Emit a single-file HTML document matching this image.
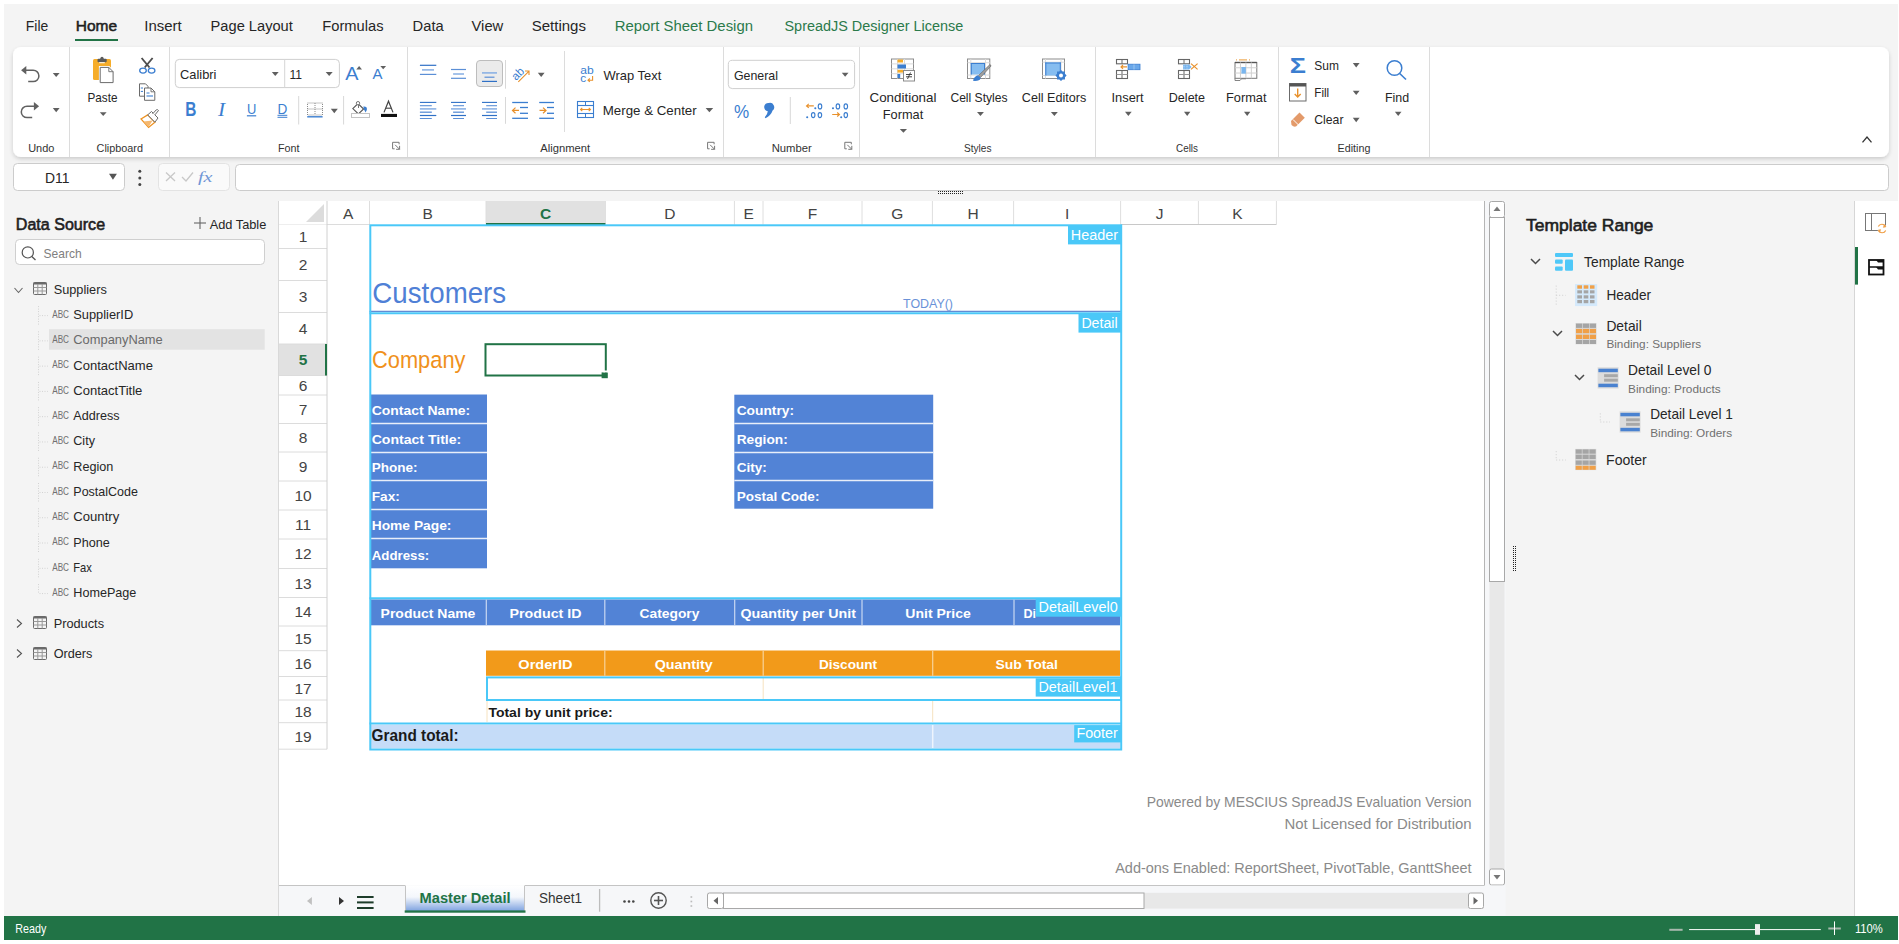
<!DOCTYPE html>
<html><head><meta charset="utf-8"><title>SpreadJS Designer</title>
<style>html,body{margin:0;padding:0;background:#fff;width:1899px;height:944px;overflow:hidden;position:relative;font-family:"Liberation Sans",sans-serif}</style>
</head><body>
<svg width="1899" height="944" viewBox="0 0 1899 944" style="position:absolute;left:0;top:0">
<defs><filter id="sh" x="-2%" y="-20%" width="104%" height="150%"><feGaussianBlur in="SourceAlpha" stdDeviation="2"/><feOffset dy="1.5"/><feComponentTransfer><feFuncA type="linear" slope="0.17"/></feComponentTransfer><feMerge><feMergeNode/><feMergeNode in="SourceGraphic"/></feMerge></filter><linearGradient id="tabg" x1="0" y1="0" x2="0" y2="1"><stop offset="0" stop-color="#ffffff"/><stop offset="0.45" stop-color="#f4f7fc"/><stop offset="1" stop-color="#7fa3e0"/></linearGradient></defs>
<rect x="0.00" y="0.00" width="1899.00" height="944.00" fill="#ffffff"/>
<rect x="4.00" y="4.00" width="1894.00" height="936.00" fill="#f4f4f4"/>
<text x="25.80" y="31.00" font-family="Liberation Sans" font-size="15.50" font-weight="400" font-style="normal" fill="#262626" textLength="22.42" lengthAdjust="spacingAndGlyphs">File</text>
<text x="75.80" y="31.00" font-family="Liberation Sans" font-size="15.50" font-weight="400" font-style="normal" fill="#1f1f1f" textLength="41.36" lengthAdjust="spacingAndGlyphs" stroke="#1f1f1f" stroke-width="0.55">Home</text>
<text x="144.30" y="31.00" font-family="Liberation Sans" font-size="15.50" font-weight="400" font-style="normal" fill="#262626" textLength="37.42" lengthAdjust="spacingAndGlyphs">Insert</text>
<text x="210.60" y="31.00" font-family="Liberation Sans" font-size="15.50" font-weight="400" font-style="normal" fill="#262626" textLength="82.21" lengthAdjust="spacingAndGlyphs">Page Layout</text>
<text x="322.30" y="31.00" font-family="Liberation Sans" font-size="15.50" font-weight="400" font-style="normal" fill="#262626" textLength="61.27" lengthAdjust="spacingAndGlyphs">Formulas</text>
<text x="412.60" y="31.00" font-family="Liberation Sans" font-size="15.50" font-weight="400" font-style="normal" fill="#262626" textLength="31.06" lengthAdjust="spacingAndGlyphs">Data</text>
<text x="471.50" y="31.00" font-family="Liberation Sans" font-size="15.50" font-weight="400" font-style="normal" fill="#262626" textLength="31.79" lengthAdjust="spacingAndGlyphs">View</text>
<text x="531.70" y="31.00" font-family="Liberation Sans" font-size="15.50" font-weight="400" font-style="normal" fill="#262626" textLength="54.28" lengthAdjust="spacingAndGlyphs">Settings</text>
<text x="614.70" y="31.00" font-family="Liberation Sans" font-size="15.50" font-weight="400" font-style="normal" fill="#2b7a4b" textLength="138.28" lengthAdjust="spacingAndGlyphs">Report Sheet Design</text>
<text x="784.50" y="31.00" font-family="Liberation Sans" font-size="15.50" font-weight="400" font-style="normal" fill="#2b7a4b" textLength="178.82" lengthAdjust="spacingAndGlyphs">SpreadJS Designer License</text>
<rect x="75.00" y="39.00" width="43.00" height="2.00" fill="#217346"/>
<rect x="13.00" y="47.00" width="1876.00" height="110.00" fill="#ffffff" rx="8" filter="url(#sh)"/>
<line x1="69.50" y1="47.00" x2="69.50" y2="157.00" stroke="#dcdcdc" stroke-width="1"/>
<line x1="169.50" y1="47.00" x2="169.50" y2="157.00" stroke="#dcdcdc" stroke-width="1"/>
<line x1="407.50" y1="47.00" x2="407.50" y2="157.00" stroke="#dcdcdc" stroke-width="1"/>
<line x1="723.50" y1="47.00" x2="723.50" y2="157.00" stroke="#dcdcdc" stroke-width="1"/>
<line x1="859.50" y1="47.00" x2="859.50" y2="157.00" stroke="#dcdcdc" stroke-width="1"/>
<line x1="1095.50" y1="47.00" x2="1095.50" y2="157.00" stroke="#dcdcdc" stroke-width="1"/>
<line x1="1278.50" y1="47.00" x2="1278.50" y2="157.00" stroke="#dcdcdc" stroke-width="1"/>
<line x1="1429.50" y1="47.00" x2="1429.50" y2="157.00" stroke="#dcdcdc" stroke-width="1"/>
<text x="28.20" y="151.80" font-family="Liberation Sans" font-size="11.50" font-weight="400" font-style="normal" fill="#333333" textLength="26.21" lengthAdjust="spacingAndGlyphs">Undo</text>
<text x="96.60" y="151.80" font-family="Liberation Sans" font-size="11.50" font-weight="400" font-style="normal" fill="#333333" textLength="46.41" lengthAdjust="spacingAndGlyphs">Clipboard</text>
<text x="278.00" y="151.80" font-family="Liberation Sans" font-size="11.50" font-weight="400" font-style="normal" fill="#333333" textLength="21.51" lengthAdjust="spacingAndGlyphs">Font</text>
<text x="540.30" y="151.80" font-family="Liberation Sans" font-size="11.50" font-weight="400" font-style="normal" fill="#333333" textLength="49.82" lengthAdjust="spacingAndGlyphs">Alignment</text>
<text x="771.70" y="151.80" font-family="Liberation Sans" font-size="11.50" font-weight="400" font-style="normal" fill="#333333" textLength="40.12" lengthAdjust="spacingAndGlyphs">Number</text>
<text x="964.00" y="151.80" font-family="Liberation Sans" font-size="11.50" font-weight="400" font-style="normal" fill="#333333" textLength="27.48" lengthAdjust="spacingAndGlyphs">Styles</text>
<text x="1176.00" y="151.80" font-family="Liberation Sans" font-size="11.50" font-weight="400" font-style="normal" fill="#333333" textLength="21.98" lengthAdjust="spacingAndGlyphs">Cells</text>
<text x="1337.60" y="151.80" font-family="Liberation Sans" font-size="11.50" font-weight="400" font-style="normal" fill="#333333" textLength="32.78" lengthAdjust="spacingAndGlyphs">Editing</text>
<path d="M399.1,144.3 V142.3 H392.6 V148.8 H394.6" fill="none" stroke="#777" stroke-width="1"/>
<path d="M395.1,144.8 L399.6,149.3 M399.6,145.8 V149.3 H396.1" fill="none" stroke="#777" stroke-width="1"/>
<path d="M714.1,144.3 V142.3 H707.6 V148.8 H709.6" fill="none" stroke="#777" stroke-width="1"/>
<path d="M710.1,144.8 L714.6,149.3 M714.6,145.8 V149.3 H711.1" fill="none" stroke="#777" stroke-width="1"/>
<path d="M851.3,144.3 V142.3 H844.8 V148.8 H846.8" fill="none" stroke="#777" stroke-width="1"/>
<path d="M847.3,144.8 L851.8,149.3 M851.8,145.8 V149.3 H848.3" fill="none" stroke="#777" stroke-width="1"/>
<path d="M21.1,70.2 L26.3,66 L26.3,74.4 Z" fill="#616161"/>
<path d="M25.5,70.2 H33.2 A5.7,5.7 0 0 1 33.2,81.6 H28.2" fill="none" stroke="#616161" stroke-width="1.5"/>
<path d="M39.1,106.2 L33.9,102 L33.9,110.4 Z" fill="#616161"/>
<path d="M34.7,106.2 H27 A5.7,5.7 0 0 0 27,117.6 H32.2" fill="none" stroke="#616161" stroke-width="1.5"/>
<path d="M52.8,72.9 L59.6,72.9 L56.2,77.1 Z" fill="#5f5f5f"/>
<path d="M52.8,108 L59.6,108 L56.2,112.3 Z" fill="#5f5f5f"/>
<rect x="93.00" y="59.00" width="18.00" height="21.00" fill="#f6ad2a" rx="1.5"/>
<rect x="97.50" y="58.80" width="9.20" height="3.40" fill="#5a5a5a" rx="1"/>
<circle cx="102" cy="58.3" r="1.6" fill="#5a5a5a"/>
<rect x="99.20" y="62.20" width="5.60" height="1.00" fill="#fff"/>
<path d="M100.2,67.4 H108.8 L113.1,71.7 V82.6 H100.2 Z" fill="#ffffff" stroke="#ffffff" stroke-width="2.6"/>
<path d="M100.2,67.4 H108.8 L113.1,71.7 V82.6 H100.2 Z" fill="#ffffff" stroke="#6b6b6b" stroke-width="1"/>
<path d="M108.8,67.4 V71.7 H113.1" fill="none" stroke="#6b6b6b" stroke-width="0.9"/>
<text x="87.50" y="101.70" font-family="Liberation Sans" font-size="12.40" font-weight="400" font-style="normal" fill="#262626" textLength="30.03" lengthAdjust="spacingAndGlyphs">Paste</text>
<path d="M99.8,112.3 L106.6,112.3 L103.19999999999999,116.1 Z" fill="#5f5f5f"/>
<line x1="141.60" y1="58.00" x2="149.50" y2="67.50" stroke="#4d4d4d" stroke-width="1.9"/>
<line x1="152.60" y1="58.00" x2="144.70" y2="67.50" stroke="#4d4d4d" stroke-width="1.9"/>
<ellipse cx="143" cy="70.6" rx="3.3" ry="2.5" fill="#fff" stroke="#3b7ed0" stroke-width="1.3"/>
<ellipse cx="151.6" cy="70.6" rx="3.3" ry="2.5" fill="#fff" stroke="#3b7ed0" stroke-width="1.3"/>
<path d="M139.5,83.8 H145.5 L148,86.3 V96.2 H139.5 Z" fill="#fff" stroke="#6b6b6b" stroke-width="1"/>
<path d="M144.5,88 H151 L154.8,91.8 V100.3 H144.5 Z" fill="#fff" stroke="#6b6b6b" stroke-width="1"/>
<path d="M151,88 V91.8 H154.8" fill="none" stroke="#6b6b6b" stroke-width="0.9"/>
<line x1="146.50" y1="93.00" x2="149.50" y2="93.00" stroke="#3b7ed0" stroke-width="1"/>
<line x1="146.50" y1="96.00" x2="153.00" y2="96.00" stroke="#3b7ed0" stroke-width="1.1"/>
<line x1="140.80" y1="88.00" x2="143.00" y2="88.00" stroke="#3b7ed0" stroke-width="1"/>
<line x1="140.80" y1="91.40" x2="143.00" y2="91.40" stroke="#3b7ed0" stroke-width="1"/>
<path d="M141,119 L147.7,114.9 L154.9,122.2 L148.6,127.4 Z" fill="#fff" stroke="#ee9220" stroke-width="1.3"/>
<path d="M143.5,121.5 L152.5,120.5 L148.6,127 Z" fill="#f5b870"/>
<path d="M147.7,114.9 L151.5,111.5 L158,118 L154.9,122.2 Z" fill="#fff" stroke="#6b6b6b" stroke-width="1"/>
<path d="M152.5,114 L156.3,109.8 Q157.8,109.2 158.5,110.5 L155,114.8" fill="#fff" stroke="#6b6b6b" stroke-width="1"/>
<rect x="175.30" y="59.40" width="164.10" height="28.20" fill="#ffffff" stroke="#cfcfcf" stroke-width="1" rx="4"/>
<line x1="284.70" y1="59.40" x2="284.70" y2="87.60" stroke="#d6d6d6" stroke-width="1"/>
<text x="180.10" y="78.80" font-family="Liberation Sans" font-size="12.80" font-weight="400" font-style="normal" fill="#262626" textLength="36.39" lengthAdjust="spacingAndGlyphs">Calibri</text>
<path d="M271.8,72 L278.7,72 L275.25,75.9 Z" fill="#5f5f5f"/>
<text x="289.50" y="78.80" font-family="Liberation Sans" font-size="12.80" font-weight="400" font-style="normal" fill="#262626" textLength="12.58" lengthAdjust="spacingAndGlyphs">11</text>
<path d="M325.7,72 L332.7,72 L329.2,75.9 Z" fill="#5f5f5f"/>
<text x="345.30" y="80.00" font-family="Liberation Sans" font-size="19.00" font-weight="400" font-style="normal" fill="#3b7ed0" textLength="13.24" lengthAdjust="spacingAndGlyphs">A</text>
<path d="M356.3,69.5 L359.15,66.1 L362,69.5 Z" fill="#616161"/>
<text x="372.40" y="79.00" font-family="Liberation Sans" font-size="14.50" font-weight="400" font-style="normal" fill="#3b7ed0" textLength="9.96" lengthAdjust="spacingAndGlyphs">A</text>
<path d="M380.3,66.1 L386.1,66.1 L383.2,69.3 Z" fill="#616161"/>
<text x="185.20" y="116.30" font-family="Liberation Sans" font-size="19.50" font-weight="700" font-style="normal" fill="#3b7ed0" textLength="11.13" lengthAdjust="spacingAndGlyphs">B</text>
<text x="217.91" y="116.00" font-family="Liberation Serif" font-size="19.00" font-weight="400" font-style="italic" fill="#3b7ed0" textLength="7.10" lengthAdjust="spacingAndGlyphs">I</text>
<text x="246.90" y="113.50" font-family="Liberation Sans" font-size="15.00" font-weight="400" font-style="normal" fill="#3b7ed0" textLength="9.33" lengthAdjust="spacingAndGlyphs">U</text>
<line x1="246.90" y1="115.80" x2="256.20" y2="115.80" stroke="#3b7ed0" stroke-width="1.2"/>
<text x="277.50" y="113.50" font-family="Liberation Sans" font-size="15.00" font-weight="400" font-style="normal" fill="#3b7ed0" textLength="9.83" lengthAdjust="spacingAndGlyphs">D</text>
<line x1="277.50" y1="115.30" x2="287.30" y2="115.30" stroke="#3b7ed0" stroke-width="1"/>
<line x1="277.50" y1="117.30" x2="287.30" y2="117.30" stroke="#3b7ed0" stroke-width="1"/>
<line x1="298.70" y1="96.00" x2="298.70" y2="124.50" stroke="#d8d8d8" stroke-width="1"/>
<rect x="307.50" y="103.00" width="15.00" height="12.00" fill="none" stroke="#8a8a8a" stroke-width="1" stroke-dasharray="1,1"/>
<line x1="315.00" y1="103.00" x2="315.00" y2="115.00" stroke="#8a8a8a" stroke-width="1" stroke-dasharray="1,1"/>
<line x1="307.50" y1="109.00" x2="322.50" y2="109.00" stroke="#8a8a8a" stroke-width="1" stroke-dasharray="1,1"/>
<line x1="307.20" y1="116.80" x2="322.60" y2="116.80" stroke="#3b7ed0" stroke-width="1.4"/>
<path d="M330.8,108.7 L337.8,108.7 L334.3,113.2 Z" fill="#5f5f5f"/>
<line x1="343.60" y1="96.00" x2="343.60" y2="124.50" stroke="#d8d8d8" stroke-width="1"/>
<path d="M352.8,108.6 L358,103.6 L363.6,109 L358.4,114 Z" fill="#fff" stroke="#555" stroke-width="1.1"/>
<circle cx="358" cy="103.2" r="1.7" fill="#fff" stroke="#777" stroke-width="1"/>
<line x1="358.50" y1="104.50" x2="358.50" y2="108.00" stroke="#777" stroke-width="1"/>
<path d="M363.3,106.6 Q367.6,106.3 366.8,110 L365.6,112.4 L364,109.5 Z" fill="#3b7ed0"/>
<rect x="351.50" y="113.50" width="18.00" height="4.00" fill="#fff" stroke="#c4c4c4" stroke-width="1"/>
<path d="M384,112.4 L388.5,101.2 L393,112.4" fill="none" stroke="#444" stroke-width="1.2"/>
<line x1="385.80" y1="108.20" x2="391.20" y2="108.20" stroke="#444" stroke-width="1.1"/>
<rect x="381.00" y="113.90" width="16.00" height="3.10" fill="#111"/>
<line x1="419.90" y1="65.30" x2="436.30" y2="65.30" stroke="#2f70c6" stroke-width="1.2"/>
<line x1="422.00" y1="69.90" x2="434.00" y2="69.90" stroke="#86aee3" stroke-width="1.5"/>
<line x1="419.90" y1="74.40" x2="436.30" y2="74.40" stroke="#5b8fd6" stroke-width="1.2"/>
<line x1="451.00" y1="69.50" x2="466.00" y2="69.50" stroke="#5b8fd6" stroke-width="1.2"/>
<line x1="453.10" y1="74.00" x2="464.00" y2="74.00" stroke="#86aee3" stroke-width="1.5"/>
<line x1="451.00" y1="78.30" x2="466.00" y2="78.30" stroke="#5b8fd6" stroke-width="1.2"/>
<rect x="476.50" y="60.50" width="26.00" height="26.00" fill="#ebebeb" stroke="#bdbdbd" stroke-width="1" rx="3.5"/>
<line x1="482.00" y1="72.90" x2="497.00" y2="72.90" stroke="#86aee3" stroke-width="1.5"/>
<line x1="484.50" y1="77.20" x2="494.50" y2="77.20" stroke="#5b8fd6" stroke-width="1.2"/>
<line x1="482.00" y1="81.40" x2="497.00" y2="81.40" stroke="#2f70c6" stroke-width="1.2"/>
<line x1="505.50" y1="60.00" x2="505.50" y2="88.70" stroke="#d8d8d8" stroke-width="1"/>
<text x="516" y="81" font-family="Liberation Sans" font-size="11.5" fill="#3b7ed0" transform="rotate(-45 516 81)">ab</text>
<path d="M518.3,81.8 L528.8,71.3 M525,71 H529 V75" fill="none" stroke="#e8912c" stroke-width="1.1"/>
<path d="M537.8,72.7 L544.6,72.7 L541.2,77 Z" fill="#5f5f5f"/>
<line x1="419.90" y1="102.40" x2="436.30" y2="102.40" stroke="#2f70c6" stroke-width="1.1"/>
<line x1="451.00" y1="102.40" x2="466.00" y2="102.40" stroke="#2f70c6" stroke-width="1.1"/>
<line x1="482.00" y1="102.40" x2="497.00" y2="102.40" stroke="#2f70c6" stroke-width="1.1"/>
<line x1="419.90" y1="105.70" x2="431.80" y2="105.70" stroke="#5b8fd6" stroke-width="1.1"/>
<line x1="453.10" y1="105.70" x2="464.00" y2="105.70" stroke="#5b8fd6" stroke-width="1.1"/>
<line x1="486.20" y1="105.70" x2="497.00" y2="105.70" stroke="#5b8fd6" stroke-width="1.1"/>
<line x1="419.90" y1="108.90" x2="436.30" y2="108.90" stroke="#86aee3" stroke-width="1.5"/>
<line x1="451.00" y1="108.90" x2="466.00" y2="108.90" stroke="#86aee3" stroke-width="1.5"/>
<line x1="482.00" y1="108.90" x2="497.00" y2="108.90" stroke="#86aee3" stroke-width="1.5"/>
<line x1="419.90" y1="112.20" x2="431.80" y2="112.20" stroke="#5b8fd6" stroke-width="1.3"/>
<line x1="453.10" y1="112.20" x2="464.00" y2="112.20" stroke="#5b8fd6" stroke-width="1.3"/>
<line x1="486.20" y1="112.20" x2="497.00" y2="112.20" stroke="#5b8fd6" stroke-width="1.3"/>
<line x1="419.90" y1="115.50" x2="436.30" y2="115.50" stroke="#2f70c6" stroke-width="1.2"/>
<line x1="451.00" y1="115.50" x2="466.00" y2="115.50" stroke="#2f70c6" stroke-width="1.2"/>
<line x1="482.00" y1="115.50" x2="497.00" y2="115.50" stroke="#2f70c6" stroke-width="1.2"/>
<line x1="419.90" y1="118.50" x2="431.80" y2="118.50" stroke="#5b8fd6" stroke-width="1"/>
<line x1="453.10" y1="118.50" x2="464.00" y2="118.50" stroke="#5b8fd6" stroke-width="1"/>
<line x1="486.20" y1="118.50" x2="497.00" y2="118.50" stroke="#5b8fd6" stroke-width="1"/>
<line x1="505.50" y1="97.00" x2="505.50" y2="123.80" stroke="#d8d8d8" stroke-width="1"/>
<line x1="512.20" y1="102.50" x2="528.00" y2="102.50" stroke="#3b7ed0" stroke-width="1.3"/>
<line x1="512.20" y1="118.30" x2="528.00" y2="118.30" stroke="#3b7ed0" stroke-width="1.3"/>
<line x1="520.00" y1="107.50" x2="528.00" y2="107.50" stroke="#3b7ed0" stroke-width="1.3"/>
<line x1="520.00" y1="113.30" x2="528.00" y2="113.30" stroke="#3b7ed0" stroke-width="1.3"/>
<path d="M512.5,110.4 H519 M515.5,107.6 L512.5,110.4 L515.5,113.2" fill="none" stroke="#e8912c" stroke-width="1.2"/>
<line x1="539.20" y1="102.50" x2="554.00" y2="102.50" stroke="#3b7ed0" stroke-width="1.3"/>
<line x1="539.20" y1="118.30" x2="554.00" y2="118.30" stroke="#3b7ed0" stroke-width="1.3"/>
<line x1="547.00" y1="107.50" x2="554.00" y2="107.50" stroke="#3b7ed0" stroke-width="1.3"/>
<line x1="547.00" y1="113.30" x2="554.00" y2="113.30" stroke="#3b7ed0" stroke-width="1.3"/>
<path d="M539.5,110.4 H546 M543,107.6 L546,110.4 L543,113.2" fill="none" stroke="#e8912c" stroke-width="1.2"/>
<line x1="564.50" y1="51.00" x2="564.50" y2="132.00" stroke="#dcdcdc" stroke-width="1"/>
<text x="580.20" y="73.80" font-family="Liberation Sans" font-size="11.50" font-weight="400" font-style="normal" fill="#3b7ed0" textLength="13.43" lengthAdjust="spacingAndGlyphs">ab</text>
<text x="580.20" y="81.60" font-family="Liberation Sans" font-size="11.50" font-weight="400" font-style="normal" fill="#3b7ed0" textLength="5.90" lengthAdjust="spacingAndGlyphs">c</text>
<path d="M592.6,76 V80.2 H588.2 M589.8,78.5 L588,80.2 L589.8,81.9" fill="none" stroke="#e8912c" stroke-width="1.1"/>
<text x="603.60" y="79.50" font-family="Liberation Sans" font-size="13.20" font-weight="400" font-style="normal" fill="#262626" textLength="57.70" lengthAdjust="spacingAndGlyphs">Wrap Text</text>
<rect x="577.50" y="101.50" width="16.00" height="16.00" fill="none" stroke="#3b7ed0" stroke-width="1.1"/>
<line x1="577.50" y1="105.50" x2="593.50" y2="105.50" stroke="#3b7ed0" stroke-width="1.1"/>
<line x1="577.50" y1="113.50" x2="593.50" y2="113.50" stroke="#3b7ed0" stroke-width="1.1"/>
<line x1="585.50" y1="101.50" x2="585.50" y2="105.50" stroke="#3b7ed0" stroke-width="1"/>
<line x1="585.50" y1="113.50" x2="585.50" y2="117.50" stroke="#3b7ed0" stroke-width="1"/>
<path d="M580.5,109.5 H590.5 M582.3,107.8 L580.5,109.5 L582.3,111.2 M588.7,107.8 L590.5,109.5 L588.7,111.2" fill="none" stroke="#e8912c" stroke-width="1.1"/>
<text x="602.80" y="114.90" font-family="Liberation Sans" font-size="13.20" font-weight="400" font-style="normal" fill="#262626" textLength="93.88" lengthAdjust="spacingAndGlyphs">Merge &amp; Center</text>
<path d="M705.6,108 L713.2,108 L709.4000000000001,112.3 Z" fill="#5f5f5f"/>
<rect x="728.30" y="60.30" width="126.30" height="28.30" fill="#fff" stroke="#cfcfcf" stroke-width="1" rx="4"/>
<text x="733.90" y="79.70" font-family="Liberation Sans" font-size="12.90" font-weight="400" font-style="normal" fill="#262626" textLength="44.07" lengthAdjust="spacingAndGlyphs">General</text>
<path d="M841.8,72.8 L848.5,72.8 L845.15,76.7 Z" fill="#5f5f5f"/>
<text x="733.90" y="118.00" font-family="Liberation Sans" font-size="18.00" font-weight="400" font-style="normal" fill="#3b7ed0" textLength="15.19" lengthAdjust="spacingAndGlyphs">%</text>
<path d="M768.8,103 A4.3,4.3 0 0 1 772.6,110.5 Q771,115.5 765.5,118.2 L764.8,117.2 Q767.5,114.5 767.8,111.2 A4,4 0 0 1 768.8,103 Z" fill="#3b7ed0"/>
<line x1="790.30" y1="97.00" x2="790.30" y2="124.00" stroke="#d8d8d8" stroke-width="1"/>
<path d="M806.5,105.9 H813.8 M808.8,103.9 L806.5,105.9 L808.8,107.9" fill="none" stroke="#e8912c" stroke-width="1.1"/>
<circle cx="815.3" cy="108.3" r="1.05" fill="#3b7ed0"/>
<ellipse cx="820" cy="106.4" rx="1.75" ry="2.5" fill="none" stroke="#3b7ed0" stroke-width="1.15"/>
<circle cx="807.2" cy="117.2" r="1.05" fill="#3b7ed0"/>
<ellipse cx="813.2" cy="115.1" rx="1.75" ry="2.5" fill="none" stroke="#3b7ed0" stroke-width="1.15"/>
<ellipse cx="819.9" cy="115.1" rx="1.75" ry="2.5" fill="none" stroke="#3b7ed0" stroke-width="1.15"/>
<circle cx="833" cy="108.3" r="1.05" fill="#3b7ed0"/>
<ellipse cx="837.9" cy="106.4" rx="1.75" ry="2.5" fill="none" stroke="#3b7ed0" stroke-width="1.15"/>
<ellipse cx="845.8" cy="106.4" rx="1.75" ry="2.5" fill="none" stroke="#3b7ed0" stroke-width="1.15"/>
<path d="M832.2,114.5 H839.5 M837.2,112.5 L839.5,114.5 L837.2,116.5" fill="none" stroke="#e8912c" stroke-width="1.1"/>
<circle cx="841.2" cy="117.2" r="1.05" fill="#3b7ed0"/>
<ellipse cx="845.8" cy="115.1" rx="1.75" ry="2.5" fill="none" stroke="#3b7ed0" stroke-width="1.15"/>
<rect x="891.50" y="59.00" width="22.00" height="19.50" fill="#fff" stroke="#8c8c8c" stroke-width="1"/>
<line x1="891.50" y1="63.90" x2="913.50" y2="63.90" stroke="#dadada" stroke-width="1"/>
<line x1="891.50" y1="68.80" x2="913.50" y2="68.80" stroke="#dadada" stroke-width="1"/>
<line x1="891.50" y1="73.70" x2="913.50" y2="73.70" stroke="#dadada" stroke-width="1"/>
<line x1="897.50" y1="59.00" x2="897.50" y2="78.50" stroke="#dadada" stroke-width="1"/>
<line x1="904.50" y1="59.00" x2="904.50" y2="78.50" stroke="#dadada" stroke-width="1"/>
<rect x="897.50" y="59.50" width="5.50" height="3.00" fill="#f6ad2a"/>
<rect x="897.50" y="64.50" width="8.50" height="4.00" fill="#3b7ed0"/>
<rect x="897.50" y="69.80" width="5.50" height="2.80" fill="#f6ad2a"/>
<rect x="897.50" y="74.00" width="2.70" height="4.00" fill="#3b7ed0"/>
<rect x="903.50" y="70.50" width="11.00" height="10.50" fill="#fff" stroke="#8a8a8a" stroke-width="1"/>
<line x1="906.00" y1="74.50" x2="912.00" y2="74.50" stroke="#333" stroke-width="0.9"/>
<line x1="906.00" y1="76.80" x2="912.00" y2="76.80" stroke="#333" stroke-width="0.9"/>
<line x1="910.50" y1="72.50" x2="907.50" y2="79.00" stroke="#333" stroke-width="0.9"/>
<text x="869.50" y="101.80" font-family="Liberation Sans" font-size="12.80" font-weight="400" font-style="normal" fill="#262626" textLength="66.98" lengthAdjust="spacingAndGlyphs">Conditional</text>
<text x="882.80" y="118.90" font-family="Liberation Sans" font-size="12.80" font-weight="400" font-style="normal" fill="#262626" textLength="40.43" lengthAdjust="spacingAndGlyphs">Format</text>
<path d="M899.8,129 L907,129 L903.4,132.8 Z" fill="#5f5f5f"/>
<rect x="967.50" y="59.00" width="22.30" height="19.50" fill="#fff" stroke="#8c8c8c" stroke-width="1"/>
<line x1="967.50" y1="62.70" x2="989.80" y2="62.70" stroke="#dadada" stroke-width="1"/>
<line x1="967.50" y1="75.00" x2="989.80" y2="75.00" stroke="#dadada" stroke-width="1"/>
<line x1="970.80" y1="59.00" x2="970.80" y2="78.50" stroke="#dadada" stroke-width="1"/>
<line x1="985.50" y1="59.00" x2="985.50" y2="78.50" stroke="#dadada" stroke-width="1"/>
<rect x="970.80" y="63.00" width="14.20" height="11.50" fill="#86bdf0"/>
<line x1="970.80" y1="63.50" x2="985.00" y2="63.50" stroke="#3b7ed0" stroke-width="1"/>
<line x1="984.50" y1="63.00" x2="984.50" y2="74.50" stroke="#3b7ed0" stroke-width="1"/>
<line x1="971.30" y1="63.00" x2="971.30" y2="74.50" stroke="#3b7ed0" stroke-width="1"/>
<path d="M978.5,75.5 L989.5,65 Q991.3,64.4 990.8,66.2 L980.5,77.5 Z" fill="#a0a0a0" stroke="#6b6b6b" stroke-width="0.7"/>
<path d="M973,80.8 Q974,76.2 977.8,75.2 L980.8,78 Q979.5,81.5 973,80.8 Z" fill="#3b7ed0"/>
<text x="950.40" y="101.80" font-family="Liberation Sans" font-size="12.80" font-weight="400" font-style="normal" fill="#262626" textLength="57.18" lengthAdjust="spacingAndGlyphs">Cell Styles</text>
<path d="M977,112 L983.9,112 L980.45,116 Z" fill="#5f5f5f"/>
<rect x="1042.50" y="59.00" width="22.00" height="19.50" fill="#fff" stroke="#8c8c8c" stroke-width="1"/>
<line x1="1042.50" y1="62.20" x2="1064.50" y2="62.20" stroke="#dadada" stroke-width="1"/>
<line x1="1042.50" y1="75.50" x2="1064.50" y2="75.50" stroke="#dadada" stroke-width="1"/>
<line x1="1045.50" y1="59.00" x2="1045.50" y2="78.50" stroke="#dadada" stroke-width="1"/>
<line x1="1061.00" y1="59.00" x2="1061.00" y2="78.50" stroke="#dadada" stroke-width="1"/>
<rect x="1045.30" y="62.50" width="15.50" height="13.00" fill="#86bdf0"/>
<line x1="1045.30" y1="63.00" x2="1060.80" y2="63.00" stroke="#3b7ed0" stroke-width="1"/>
<line x1="1060.30" y1="62.50" x2="1060.30" y2="75.50" stroke="#3b7ed0" stroke-width="1"/>
<line x1="1045.80" y1="62.50" x2="1045.80" y2="75.50" stroke="#3b7ed0" stroke-width="1"/>
<path d="M1066.60,75.50 L1064.97,77.15 L1064.96,79.46 L1062.65,79.47 L1061.00,81.10 L1059.35,79.47 L1057.04,79.46 L1057.03,77.15 L1055.40,75.50 L1057.03,73.85 L1057.04,71.54 L1059.35,71.53 L1061.00,69.90 L1062.65,71.53 L1064.96,71.54 L1064.97,73.85 Z" fill="#3b7ed0"/>
<circle cx="1061" cy="75.5" r="2" fill="#fff"/>
<text x="1021.80" y="101.80" font-family="Liberation Sans" font-size="12.80" font-weight="400" font-style="normal" fill="#262626" textLength="64.47" lengthAdjust="spacingAndGlyphs">Cell Editors</text>
<path d="M1050.9,112 L1057.8,112 L1054.35,116 Z" fill="#5f5f5f"/>
<rect x="1116.50" y="59.50" width="11.00" height="4.30" fill="#fff" stroke="#666" stroke-width="1.1"/>
<line x1="1122.00" y1="59.50" x2="1122.00" y2="63.80" stroke="#666" stroke-width="1"/>
<rect x="1116.50" y="70.50" width="11.00" height="8.00" fill="#fff" stroke="#666" stroke-width="1.1"/>
<line x1="1122.00" y1="70.50" x2="1122.00" y2="78.50" stroke="#666" stroke-width="1"/>
<line x1="1116.50" y1="74.50" x2="1127.50" y2="74.50" stroke="#999" stroke-width="1"/>
<rect x="1128.10" y="64.20" width="11.90" height="5.50" fill="#6aa8ea" stroke="#3b7ed0" stroke-width="0.8"/>
<line x1="1134.00" y1="64.50" x2="1134.00" y2="69.50" stroke="#9cc6f0" stroke-width="1"/>
<path d="M1121,66.9 H1127 M1123,65 L1121,66.9 L1123,68.8" fill="none" stroke="#e8912c" stroke-width="1.1"/>
<text x="1111.50" y="101.90" font-family="Liberation Sans" font-size="12.80" font-weight="400" font-style="normal" fill="#262626" textLength="32.21" lengthAdjust="spacingAndGlyphs">Insert</text>
<path d="M1125,111.8 L1131.7,111.8 L1128.35,115.9 Z" fill="#5f5f5f"/>
<rect x="1178.50" y="59.50" width="11.00" height="4.30" fill="#fff" stroke="#666" stroke-width="1.1"/>
<line x1="1184.00" y1="59.50" x2="1184.00" y2="63.80" stroke="#666" stroke-width="1"/>
<rect x="1178.50" y="70.50" width="11.00" height="8.00" fill="#fff" stroke="#666" stroke-width="1.1"/>
<line x1="1184.00" y1="70.50" x2="1184.00" y2="78.50" stroke="#666" stroke-width="1"/>
<line x1="1178.50" y1="74.50" x2="1189.50" y2="74.50" stroke="#999" stroke-width="1"/>
<path d="M1183,64.5 H1189 L1191.6,66.9 L1189,69.5 H1183 Z" fill="#7ab6ee"/>
<line x1="1184.00" y1="64.50" x2="1184.00" y2="69.50" stroke="#fff" stroke-width="0.6" stroke-dasharray="0.8,0.8"/>
<line x1="1187.00" y1="64.50" x2="1187.00" y2="69.50" stroke="#fff" stroke-width="0.6" stroke-dasharray="0.8,0.8"/>
<path d="M1191,63.6 L1197.6,69.4 M1197.6,63.6 L1191,69.4" fill="none" stroke="#e8912c" stroke-width="1.2"/>
<text x="1168.80" y="101.90" font-family="Liberation Sans" font-size="12.80" font-weight="400" font-style="normal" fill="#262626" textLength="36.31" lengthAdjust="spacingAndGlyphs">Delete</text>
<path d="M1184,111.8 L1190.4,111.8 L1187.2,115.9 Z" fill="#5f5f5f"/>
<rect x="1235.00" y="62.50" width="21.80" height="15.80" fill="#fff" stroke="#777" stroke-width="1"/>
<line x1="1235.00" y1="62.50" x2="1256.80" y2="62.50" stroke="#555" stroke-width="1.4"/>
<line x1="1240.45" y1="62.50" x2="1240.45" y2="78.30" stroke="#d0d0d0" stroke-width="1"/>
<line x1="1245.90" y1="62.50" x2="1245.90" y2="78.30" stroke="#d0d0d0" stroke-width="1"/>
<line x1="1251.35" y1="62.50" x2="1251.35" y2="78.30" stroke="#d0d0d0" stroke-width="1"/>
<line x1="1235.00" y1="67.77" x2="1256.80" y2="67.77" stroke="#d0d0d0" stroke-width="1"/>
<line x1="1235.00" y1="73.04" x2="1256.80" y2="73.04" stroke="#d0d0d0" stroke-width="1"/>
<rect x="1241.40" y="67.00" width="4.50" height="6.60" fill="#7ab6ee"/>
<line x1="1236.00" y1="59.90" x2="1252.00" y2="59.90" stroke="#f0b060" stroke-width="1.3" stroke-dasharray="1,2,8,2"/>
<path d="M1235,78.3 V80.5 H1240 L1241.5,78.8 H1246" fill="none" stroke="#777" stroke-width="0.9"/>
<text x="1226.00" y="101.90" font-family="Liberation Sans" font-size="12.80" font-weight="400" font-style="normal" fill="#262626" textLength="40.53" lengthAdjust="spacingAndGlyphs">Format</text>
<path d="M1244,111.8 L1250.4,111.8 L1247.2,115.9 Z" fill="#5f5f5f"/>
<text x="1289.80" y="73.30" font-family="Liberation Sans" font-size="22.00" font-weight="700" font-style="normal" fill="#3b7ed0" textLength="16.20" lengthAdjust="spacingAndGlyphs">Σ</text>
<text x="1314.30" y="69.70" font-family="Liberation Sans" font-size="12.80" font-weight="400" font-style="normal" fill="#262626" textLength="24.61" lengthAdjust="spacingAndGlyphs">Sum</text>
<path d="M1352.8,62.9 L1359.6,62.9 L1356.1999999999998,67.4 Z" fill="#5f5f5f"/>
<rect x="1289.50" y="83.50" width="16.50" height="17.50" fill="#fff" stroke="#6b6b6b" stroke-width="1"/>
<rect x="1289.50" y="83.50" width="16.50" height="3.00" fill="#555"/>
<path d="M1297.7,88.5 V97 M1294.7,94 L1297.7,97 L1300.7,94" fill="none" stroke="#e8912c" stroke-width="1.4"/>
<text x="1314.30" y="97.40" font-family="Liberation Sans" font-size="12.80" font-weight="400" font-style="normal" fill="#262626" textLength="14.93" lengthAdjust="spacingAndGlyphs">Fill</text>
<path d="M1352.8,90.8 L1359.6,90.8 L1356.1999999999998,95.1 Z" fill="#5f5f5f"/>
<path d="M1291,121 L1299.5,112.5 L1304.8,117.8 L1296.3,126.3 Q1294,127.5 1291.5,125 Z" fill="#e39a6a"/>
<line x1="1293.00" y1="119.50" x2="1298.50" y2="125.00" stroke="#fff" stroke-width="1"/>
<text x="1314.30" y="124.30" font-family="Liberation Sans" font-size="12.80" font-weight="400" font-style="normal" fill="#262626" textLength="29.20" lengthAdjust="spacingAndGlyphs">Clear</text>
<path d="M1352.8,117.7 L1359.6,117.7 L1356.1999999999998,122.2 Z" fill="#5f5f5f"/>
<circle cx="1394.5" cy="68" r="7.3" fill="none" stroke="#3b7ed0" stroke-width="1.5"/>
<line x1="1399.70" y1="73.50" x2="1406.00" y2="79.50" stroke="#3b7ed0" stroke-width="1.6"/>
<text x="1385.00" y="101.90" font-family="Liberation Sans" font-size="12.80" font-weight="400" font-style="normal" fill="#262626" textLength="24.20" lengthAdjust="spacingAndGlyphs">Find</text>
<path d="M1394.9,111.8 L1401.5,111.8 L1398.2,115.9 Z" fill="#5f5f5f"/>
<path d="M1862.5,142.3 L1867,137 L1871.5,142.3" fill="none" stroke="#333" stroke-width="1.3"/>
<rect x="13.50" y="163.50" width="111.00" height="27.00" fill="#fff" stroke="#cccccc" stroke-width="1" rx="4"/>
<text x="45.00" y="182.90" font-family="Liberation Sans" font-size="15.00" font-weight="400" font-style="normal" fill="#262626" textLength="24.50" lengthAdjust="spacingAndGlyphs">D11</text>
<path d="M109,173.7 L116.9,173.7 L112.95,179.7 Z" fill="#555"/>
<circle cx="139.8" cy="171.3" r="1.5" fill="#444"/>
<circle cx="139.8" cy="178.1" r="1.5" fill="#444"/>
<circle cx="139.8" cy="184.4" r="1.5" fill="#444"/>
<rect x="158.50" y="163.50" width="71.00" height="27.00" fill="#fafafa" stroke="#e3e3e3" stroke-width="1" rx="4"/>
<line x1="166.00" y1="172.50" x2="175.00" y2="181.00" stroke="#c8c8c8" stroke-width="1.3"/>
<line x1="175.00" y1="172.50" x2="166.00" y2="181.00" stroke="#c8c8c8" stroke-width="1.3"/>
<path d="M182,177 L186,181 L193,172.5" fill="none" stroke="#c8c8c8" stroke-width="1.3"/>
<text x="198.00" y="181.50" font-family="Liberation Serif" font-size="15.50" font-weight="400" font-style="italic" fill="#6f96d6" textLength="14.53" lengthAdjust="spacingAndGlyphs">fx</text>
<rect x="235.50" y="164.50" width="1653.00" height="26.00" fill="#fff" stroke="#cccccc" stroke-width="1" rx="4"/>
<rect x="938" y="191" width="1" height="1" fill="#222"/>
<rect x="938" y="193" width="1" height="1" fill="#222"/>
<rect x="940" y="191" width="1" height="1" fill="#222"/>
<rect x="940" y="193" width="1" height="1" fill="#222"/>
<rect x="942" y="191" width="1" height="1" fill="#222"/>
<rect x="942" y="193" width="1" height="1" fill="#222"/>
<rect x="944" y="191" width="1" height="1" fill="#222"/>
<rect x="944" y="193" width="1" height="1" fill="#222"/>
<rect x="946" y="191" width="1" height="1" fill="#222"/>
<rect x="946" y="193" width="1" height="1" fill="#222"/>
<rect x="948" y="191" width="1" height="1" fill="#222"/>
<rect x="948" y="193" width="1" height="1" fill="#222"/>
<rect x="950" y="191" width="1" height="1" fill="#222"/>
<rect x="950" y="193" width="1" height="1" fill="#222"/>
<rect x="952" y="191" width="1" height="1" fill="#222"/>
<rect x="952" y="193" width="1" height="1" fill="#222"/>
<rect x="954" y="191" width="1" height="1" fill="#222"/>
<rect x="954" y="193" width="1" height="1" fill="#222"/>
<rect x="956" y="191" width="1" height="1" fill="#222"/>
<rect x="956" y="193" width="1" height="1" fill="#222"/>
<rect x="958" y="191" width="1" height="1" fill="#222"/>
<rect x="958" y="193" width="1" height="1" fill="#222"/>
<rect x="960" y="191" width="1" height="1" fill="#222"/>
<rect x="960" y="193" width="1" height="1" fill="#222"/>
<rect x="962" y="191" width="1" height="1" fill="#222"/>
<rect x="962" y="193" width="1" height="1" fill="#222"/>
<line x1="278.50" y1="201.00" x2="278.50" y2="916.00" stroke="#d9d9d9" stroke-width="1"/>
<text x="15.80" y="230.00" font-family="Liberation Sans" font-size="16.30" font-weight="400" font-style="normal" fill="#1f1f1f" textLength="89.28" lengthAdjust="spacingAndGlyphs" stroke="#1f1f1f" stroke-width="0.6">Data Source</text>
<line x1="194.00" y1="223.00" x2="206.00" y2="223.00" stroke="#666" stroke-width="1.1"/>
<line x1="200.00" y1="217.00" x2="200.00" y2="229.00" stroke="#666" stroke-width="1.1"/>
<text x="209.70" y="228.90" font-family="Liberation Sans" font-size="13.20" font-weight="400" font-style="normal" fill="#262626" textLength="56.60" lengthAdjust="spacingAndGlyphs">Add Table</text>
<rect x="15.50" y="239.50" width="249.00" height="25.00" fill="#fff" stroke="#cfcfcf" stroke-width="1" rx="4"/>
<circle cx="27.8" cy="252.4" r="5.6" fill="none" stroke="#555" stroke-width="1.2"/>
<line x1="31.80" y1="256.50" x2="35.50" y2="260.00" stroke="#555" stroke-width="1.3"/>
<text x="43.60" y="257.80" font-family="Liberation Sans" font-size="13.20" font-weight="400" font-style="normal" fill="#808080" textLength="38.08" lengthAdjust="spacingAndGlyphs">Search</text>
<path d="M14.5,288 L18.5,292.5 L22.5,288" fill="none" stroke="#666" stroke-width="1.1"/>
<rect x="33.50" y="282.50" width="13.00" height="12.00" fill="none" stroke="#6a6a6a" stroke-width="1" rx="1"/>
<rect x="33.50" y="282.50" width="13.00" height="2.00" fill="#6a6a6a"/>
<line x1="33.50" y1="287.50" x2="46.50" y2="287.50" stroke="#999" stroke-width="1"/>
<line x1="33.50" y1="291.00" x2="46.50" y2="291.00" stroke="#999" stroke-width="1"/>
<line x1="37.80" y1="284.00" x2="37.80" y2="294.50" stroke="#999" stroke-width="1"/>
<line x1="42.20" y1="284.00" x2="42.20" y2="294.50" stroke="#999" stroke-width="1"/>
<text x="53.70" y="293.50" font-family="Liberation Sans" font-size="13.20" font-weight="400" font-style="normal" fill="#262626" textLength="53.09" lengthAdjust="spacingAndGlyphs">Suppliers</text>
<rect x="49.00" y="329.20" width="215.70" height="20.50" fill="#e3e3e3"/>
<line x1="38.50" y1="306.10" x2="38.50" y2="324.60" stroke="#d2d2d2" stroke-width="1" stroke-dasharray="1,1.5"/>
<line x1="39.50" y1="315.60" x2="47.80" y2="315.60" stroke="#d2d2d2" stroke-width="1" stroke-dasharray="1,1.5"/>
<text x="52.20" y="317.80" font-family="Liberation Sans" font-size="10.50" font-weight="400" font-style="normal" fill="#707070" textLength="16.81" lengthAdjust="spacingAndGlyphs">ABC</text>
<text x="73.30" y="319.10" font-family="Liberation Sans" font-size="13.20" font-weight="400" font-style="normal" fill="#262626" textLength="59.89" lengthAdjust="spacingAndGlyphs">SupplierID</text>
<line x1="38.50" y1="331.37" x2="38.50" y2="349.87" stroke="#d2d2d2" stroke-width="1" stroke-dasharray="1,1.5"/>
<line x1="39.50" y1="340.87" x2="47.80" y2="340.87" stroke="#d2d2d2" stroke-width="1" stroke-dasharray="1,1.5"/>
<text x="52.20" y="343.07" font-family="Liberation Sans" font-size="10.50" font-weight="400" font-style="normal" fill="#707070" textLength="16.81" lengthAdjust="spacingAndGlyphs">ABC</text>
<text x="73.30" y="344.37" font-family="Liberation Sans" font-size="13.20" font-weight="400" font-style="normal" fill="#6a6a6a" textLength="89.47" lengthAdjust="spacingAndGlyphs">CompanyName</text>
<line x1="38.50" y1="356.64" x2="38.50" y2="375.14" stroke="#d2d2d2" stroke-width="1" stroke-dasharray="1,1.5"/>
<line x1="39.50" y1="366.14" x2="47.80" y2="366.14" stroke="#d2d2d2" stroke-width="1" stroke-dasharray="1,1.5"/>
<text x="52.20" y="368.34" font-family="Liberation Sans" font-size="10.50" font-weight="400" font-style="normal" fill="#707070" textLength="16.81" lengthAdjust="spacingAndGlyphs">ABC</text>
<text x="73.30" y="369.64" font-family="Liberation Sans" font-size="13.20" font-weight="400" font-style="normal" fill="#262626" textLength="79.59" lengthAdjust="spacingAndGlyphs">ContactName</text>
<line x1="38.50" y1="381.91" x2="38.50" y2="400.41" stroke="#d2d2d2" stroke-width="1" stroke-dasharray="1,1.5"/>
<line x1="39.50" y1="391.41" x2="47.80" y2="391.41" stroke="#d2d2d2" stroke-width="1" stroke-dasharray="1,1.5"/>
<text x="52.20" y="393.61" font-family="Liberation Sans" font-size="10.50" font-weight="400" font-style="normal" fill="#707070" textLength="16.81" lengthAdjust="spacingAndGlyphs">ABC</text>
<text x="73.30" y="394.91" font-family="Liberation Sans" font-size="13.20" font-weight="400" font-style="normal" fill="#262626" textLength="69.08" lengthAdjust="spacingAndGlyphs">ContactTitle</text>
<line x1="38.50" y1="407.18" x2="38.50" y2="425.68" stroke="#d2d2d2" stroke-width="1" stroke-dasharray="1,1.5"/>
<line x1="39.50" y1="416.68" x2="47.80" y2="416.68" stroke="#d2d2d2" stroke-width="1" stroke-dasharray="1,1.5"/>
<text x="52.20" y="418.88" font-family="Liberation Sans" font-size="10.50" font-weight="400" font-style="normal" fill="#707070" textLength="16.81" lengthAdjust="spacingAndGlyphs">ABC</text>
<text x="73.30" y="420.18" font-family="Liberation Sans" font-size="13.20" font-weight="400" font-style="normal" fill="#262626" textLength="46.18" lengthAdjust="spacingAndGlyphs">Address</text>
<line x1="38.50" y1="432.45" x2="38.50" y2="450.95" stroke="#d2d2d2" stroke-width="1" stroke-dasharray="1,1.5"/>
<line x1="39.50" y1="441.95" x2="47.80" y2="441.95" stroke="#d2d2d2" stroke-width="1" stroke-dasharray="1,1.5"/>
<text x="52.20" y="444.15" font-family="Liberation Sans" font-size="10.50" font-weight="400" font-style="normal" fill="#707070" textLength="16.81" lengthAdjust="spacingAndGlyphs">ABC</text>
<text x="73.30" y="445.45" font-family="Liberation Sans" font-size="13.20" font-weight="400" font-style="normal" fill="#262626" textLength="21.63" lengthAdjust="spacingAndGlyphs">City</text>
<line x1="38.50" y1="457.72" x2="38.50" y2="476.22" stroke="#d2d2d2" stroke-width="1" stroke-dasharray="1,1.5"/>
<line x1="39.50" y1="467.22" x2="47.80" y2="467.22" stroke="#d2d2d2" stroke-width="1" stroke-dasharray="1,1.5"/>
<text x="52.20" y="469.42" font-family="Liberation Sans" font-size="10.50" font-weight="400" font-style="normal" fill="#707070" textLength="16.81" lengthAdjust="spacingAndGlyphs">ABC</text>
<text x="73.30" y="470.72" font-family="Liberation Sans" font-size="13.20" font-weight="400" font-style="normal" fill="#262626" textLength="39.99" lengthAdjust="spacingAndGlyphs">Region</text>
<line x1="38.50" y1="482.99" x2="38.50" y2="501.49" stroke="#d2d2d2" stroke-width="1" stroke-dasharray="1,1.5"/>
<line x1="39.50" y1="492.49" x2="47.80" y2="492.49" stroke="#d2d2d2" stroke-width="1" stroke-dasharray="1,1.5"/>
<text x="52.20" y="494.69" font-family="Liberation Sans" font-size="10.50" font-weight="400" font-style="normal" fill="#707070" textLength="16.81" lengthAdjust="spacingAndGlyphs">ABC</text>
<text x="73.30" y="495.99" font-family="Liberation Sans" font-size="13.20" font-weight="400" font-style="normal" fill="#262626" textLength="64.60" lengthAdjust="spacingAndGlyphs">PostalCode</text>
<line x1="38.50" y1="508.26" x2="38.50" y2="526.76" stroke="#d2d2d2" stroke-width="1" stroke-dasharray="1,1.5"/>
<line x1="39.50" y1="517.76" x2="47.80" y2="517.76" stroke="#d2d2d2" stroke-width="1" stroke-dasharray="1,1.5"/>
<text x="52.20" y="519.96" font-family="Liberation Sans" font-size="10.50" font-weight="400" font-style="normal" fill="#707070" textLength="16.81" lengthAdjust="spacingAndGlyphs">ABC</text>
<text x="73.30" y="521.26" font-family="Liberation Sans" font-size="13.20" font-weight="400" font-style="normal" fill="#262626" textLength="45.92" lengthAdjust="spacingAndGlyphs">Country</text>
<line x1="38.50" y1="533.53" x2="38.50" y2="552.03" stroke="#d2d2d2" stroke-width="1" stroke-dasharray="1,1.5"/>
<line x1="39.50" y1="543.03" x2="47.80" y2="543.03" stroke="#d2d2d2" stroke-width="1" stroke-dasharray="1,1.5"/>
<text x="52.20" y="545.23" font-family="Liberation Sans" font-size="10.50" font-weight="400" font-style="normal" fill="#707070" textLength="16.81" lengthAdjust="spacingAndGlyphs">ABC</text>
<text x="73.30" y="546.53" font-family="Liberation Sans" font-size="13.20" font-weight="400" font-style="normal" fill="#262626" textLength="36.42" lengthAdjust="spacingAndGlyphs">Phone</text>
<line x1="38.50" y1="558.80" x2="38.50" y2="577.30" stroke="#d2d2d2" stroke-width="1" stroke-dasharray="1,1.5"/>
<line x1="39.50" y1="568.30" x2="47.80" y2="568.30" stroke="#d2d2d2" stroke-width="1" stroke-dasharray="1,1.5"/>
<text x="52.20" y="570.50" font-family="Liberation Sans" font-size="10.50" font-weight="400" font-style="normal" fill="#707070" textLength="16.81" lengthAdjust="spacingAndGlyphs">ABC</text>
<text x="73.30" y="571.80" font-family="Liberation Sans" font-size="13.20" font-weight="400" font-style="normal" fill="#262626" textLength="18.62" lengthAdjust="spacingAndGlyphs">Fax</text>
<line x1="38.50" y1="584.07" x2="38.50" y2="593.57" stroke="#d2d2d2" stroke-width="1" stroke-dasharray="1,1.5"/>
<line x1="39.50" y1="593.57" x2="47.80" y2="593.57" stroke="#d2d2d2" stroke-width="1" stroke-dasharray="1,1.5"/>
<text x="52.20" y="595.77" font-family="Liberation Sans" font-size="10.50" font-weight="400" font-style="normal" fill="#707070" textLength="16.81" lengthAdjust="spacingAndGlyphs">ABC</text>
<text x="73.30" y="597.07" font-family="Liberation Sans" font-size="13.20" font-weight="400" font-style="normal" fill="#262626" textLength="63.08" lengthAdjust="spacingAndGlyphs">HomePage</text>
<path d="M17,619.5 L21.5,623.5 L17,627.5" fill="none" stroke="#555" stroke-width="1.1"/>
<rect x="33.50" y="616.50" width="13.00" height="12.00" fill="none" stroke="#6a6a6a" stroke-width="1" rx="1"/>
<rect x="33.50" y="616.50" width="13.00" height="2.00" fill="#6a6a6a"/>
<line x1="33.50" y1="621.50" x2="46.50" y2="621.50" stroke="#999" stroke-width="1"/>
<line x1="33.50" y1="625.00" x2="46.50" y2="625.00" stroke="#999" stroke-width="1"/>
<line x1="37.80" y1="618.00" x2="37.80" y2="628.50" stroke="#999" stroke-width="1"/>
<line x1="42.20" y1="618.00" x2="42.20" y2="628.50" stroke="#999" stroke-width="1"/>
<text x="53.70" y="627.70" font-family="Liberation Sans" font-size="13.20" font-weight="400" font-style="normal" fill="#262626" textLength="50.32" lengthAdjust="spacingAndGlyphs">Products</text>
<path d="M17,649.5 L21.5,653.5 L17,657.5" fill="none" stroke="#555" stroke-width="1.1"/>
<rect x="33.50" y="647.50" width="13.00" height="12.00" fill="none" stroke="#6a6a6a" stroke-width="1" rx="1"/>
<rect x="33.50" y="647.50" width="13.00" height="2.00" fill="#6a6a6a"/>
<line x1="33.50" y1="652.50" x2="46.50" y2="652.50" stroke="#999" stroke-width="1"/>
<line x1="33.50" y1="656.00" x2="46.50" y2="656.00" stroke="#999" stroke-width="1"/>
<line x1="37.80" y1="649.00" x2="37.80" y2="659.50" stroke="#999" stroke-width="1"/>
<line x1="42.20" y1="649.00" x2="42.20" y2="659.50" stroke="#999" stroke-width="1"/>
<text x="53.70" y="657.70" font-family="Liberation Sans" font-size="13.20" font-weight="400" font-style="normal" fill="#262626" textLength="38.72" lengthAdjust="spacingAndGlyphs">Orders</text>
<rect x="279.00" y="201.00" width="1205.50" height="684.50" fill="#ffffff"/>
<line x1="1484.50" y1="201.00" x2="1484.50" y2="885.50" stroke="#b5b5b5" stroke-width="1"/>
<rect x="279.00" y="201.00" width="48.00" height="23.50" fill="#ffffff"/>
<path d="M324,204 V222 H306 Z" fill="#dcdcdc"/>
<rect x="486.00" y="201.00" width="119.40" height="23.50" fill="#e1e1e1"/>
<line x1="369.50" y1="201.00" x2="369.50" y2="224.50" stroke="#dedede" stroke-width="1"/>
<text x="348.25" y="218.6" text-anchor="middle" font-family="Liberation Sans" font-size="15.5" fill="#444">A</text>
<line x1="486.00" y1="201.00" x2="486.00" y2="224.50" stroke="#dedede" stroke-width="1"/>
<text x="427.75" y="218.6" text-anchor="middle" font-family="Liberation Sans" font-size="15.5" fill="#444">B</text>
<line x1="605.40" y1="201.00" x2="605.40" y2="224.50" stroke="#dedede" stroke-width="1"/>
<text x="545.7" y="218.6" text-anchor="middle" font-family="Liberation Sans" font-size="15.5" font-weight="700" fill="#217346">C</text>
<line x1="734.40" y1="201.00" x2="734.40" y2="224.50" stroke="#dedede" stroke-width="1"/>
<text x="669.9" y="218.6" text-anchor="middle" font-family="Liberation Sans" font-size="15.5" fill="#444">D</text>
<line x1="763.00" y1="201.00" x2="763.00" y2="224.50" stroke="#dedede" stroke-width="1"/>
<text x="748.7" y="218.6" text-anchor="middle" font-family="Liberation Sans" font-size="15.5" fill="#444">E</text>
<line x1="862.00" y1="201.00" x2="862.00" y2="224.50" stroke="#dedede" stroke-width="1"/>
<text x="812.5" y="218.6" text-anchor="middle" font-family="Liberation Sans" font-size="15.5" fill="#444">F</text>
<line x1="932.40" y1="201.00" x2="932.40" y2="224.50" stroke="#dedede" stroke-width="1"/>
<text x="897.2" y="218.6" text-anchor="middle" font-family="Liberation Sans" font-size="15.5" fill="#444">G</text>
<line x1="1013.60" y1="201.00" x2="1013.60" y2="224.50" stroke="#dedede" stroke-width="1"/>
<text x="973.0" y="218.6" text-anchor="middle" font-family="Liberation Sans" font-size="15.5" fill="#444">H</text>
<line x1="1120.60" y1="201.00" x2="1120.60" y2="224.50" stroke="#dedede" stroke-width="1"/>
<text x="1067.1" y="218.6" text-anchor="middle" font-family="Liberation Sans" font-size="15.5" fill="#444">I</text>
<line x1="1198.40" y1="201.00" x2="1198.40" y2="224.50" stroke="#dedede" stroke-width="1"/>
<text x="1159.5" y="218.6" text-anchor="middle" font-family="Liberation Sans" font-size="15.5" fill="#444">J</text>
<line x1="1276.40" y1="201.00" x2="1276.40" y2="224.50" stroke="#dedede" stroke-width="1"/>
<text x="1237.4" y="218.6" text-anchor="middle" font-family="Liberation Sans" font-size="15.5" fill="#444">K</text>
<line x1="486.00" y1="224.00" x2="605.40" y2="224.00" stroke="#217346" stroke-width="2"/>
<line x1="1120.60" y1="224.50" x2="1276.40" y2="224.50" stroke="#c8c8c8" stroke-width="1"/>
<line x1="279.00" y1="224.50" x2="369.50" y2="224.50" stroke="#dcdcdc" stroke-width="1"/>
<rect x="279.00" y="224.50" width="48.00" height="524.70" fill="#ffffff"/>
<rect x="279.00" y="344.00" width="47.00" height="31.50" fill="#e1e1e1"/>
<line x1="279.00" y1="248.50" x2="327.00" y2="248.50" stroke="#dcdcdc" stroke-width="1"/>
<text x="303" y="242.1" text-anchor="middle" font-family="Liberation Sans" font-size="15.5" fill="#444">1</text>
<line x1="279.00" y1="280.50" x2="327.00" y2="280.50" stroke="#dcdcdc" stroke-width="1"/>
<text x="303" y="270.1" text-anchor="middle" font-family="Liberation Sans" font-size="15.5" fill="#444">2</text>
<line x1="279.00" y1="312.50" x2="327.00" y2="312.50" stroke="#dcdcdc" stroke-width="1"/>
<text x="303" y="302.1" text-anchor="middle" font-family="Liberation Sans" font-size="15.5" fill="#444">3</text>
<line x1="279.00" y1="344.00" x2="327.00" y2="344.00" stroke="#dcdcdc" stroke-width="1"/>
<text x="303" y="333.9" text-anchor="middle" font-family="Liberation Sans" font-size="15.5" fill="#444">4</text>
<line x1="279.00" y1="375.50" x2="327.00" y2="375.50" stroke="#dcdcdc" stroke-width="1"/>
<text x="303" y="365.4" text-anchor="middle" font-family="Liberation Sans" font-size="15.5" font-weight="700" fill="#217346">5</text>
<line x1="279.00" y1="395.00" x2="327.00" y2="395.00" stroke="#dcdcdc" stroke-width="1"/>
<text x="303" y="390.9" text-anchor="middle" font-family="Liberation Sans" font-size="15.5" fill="#444">6</text>
<line x1="279.00" y1="423.50" x2="327.00" y2="423.50" stroke="#dcdcdc" stroke-width="1"/>
<text x="303" y="414.9" text-anchor="middle" font-family="Liberation Sans" font-size="15.5" fill="#444">7</text>
<line x1="279.00" y1="452.00" x2="327.00" y2="452.00" stroke="#dcdcdc" stroke-width="1"/>
<text x="303" y="443.4" text-anchor="middle" font-family="Liberation Sans" font-size="15.5" fill="#444">8</text>
<line x1="279.00" y1="481.00" x2="327.00" y2="481.00" stroke="#dcdcdc" stroke-width="1"/>
<text x="303" y="472.1" text-anchor="middle" font-family="Liberation Sans" font-size="15.5" fill="#444">9</text>
<line x1="279.00" y1="510.00" x2="327.00" y2="510.00" stroke="#dcdcdc" stroke-width="1"/>
<text x="303" y="501.1" text-anchor="middle" font-family="Liberation Sans" font-size="15.5" fill="#444">10</text>
<line x1="279.00" y1="539.00" x2="327.00" y2="539.00" stroke="#dcdcdc" stroke-width="1"/>
<text x="303" y="530.1" text-anchor="middle" font-family="Liberation Sans" font-size="15.5" fill="#444">11</text>
<line x1="279.00" y1="568.50" x2="327.00" y2="568.50" stroke="#dcdcdc" stroke-width="1"/>
<text x="303" y="559.4" text-anchor="middle" font-family="Liberation Sans" font-size="15.5" fill="#444">12</text>
<line x1="279.00" y1="597.50" x2="327.00" y2="597.50" stroke="#dcdcdc" stroke-width="1"/>
<text x="303" y="588.6" text-anchor="middle" font-family="Liberation Sans" font-size="15.5" fill="#444">13</text>
<line x1="279.00" y1="626.00" x2="327.00" y2="626.00" stroke="#dcdcdc" stroke-width="1"/>
<text x="303" y="617.4" text-anchor="middle" font-family="Liberation Sans" font-size="15.5" fill="#444">14</text>
<line x1="279.00" y1="650.70" x2="327.00" y2="650.70" stroke="#dcdcdc" stroke-width="1"/>
<text x="303" y="644.0" text-anchor="middle" font-family="Liberation Sans" font-size="15.5" fill="#444">15</text>
<line x1="279.00" y1="676.50" x2="327.00" y2="676.50" stroke="#dcdcdc" stroke-width="1"/>
<text x="303" y="669.2" text-anchor="middle" font-family="Liberation Sans" font-size="15.5" fill="#444">16</text>
<line x1="279.00" y1="700.00" x2="327.00" y2="700.00" stroke="#dcdcdc" stroke-width="1"/>
<text x="303" y="693.9" text-anchor="middle" font-family="Liberation Sans" font-size="15.5" fill="#444">17</text>
<line x1="279.00" y1="722.70" x2="327.00" y2="722.70" stroke="#dcdcdc" stroke-width="1"/>
<text x="303" y="717.0" text-anchor="middle" font-family="Liberation Sans" font-size="15.5" fill="#444">18</text>
<line x1="279.00" y1="749.20" x2="327.00" y2="749.20" stroke="#dcdcdc" stroke-width="1"/>
<text x="303" y="741.6" text-anchor="middle" font-family="Liberation Sans" font-size="15.5" fill="#444">19</text>
<line x1="327.00" y1="201.00" x2="327.00" y2="749.20" stroke="#d0d0d0" stroke-width="1"/>
<line x1="326.00" y1="344.00" x2="326.00" y2="375.50" stroke="#217346" stroke-width="2"/>
<text x="372.30" y="302.90" font-family="Liberation Sans" font-size="30.40" font-weight="400" font-style="normal" fill="#4f80d6" textLength="133.89" lengthAdjust="spacingAndGlyphs">Customers</text>
<text x="903" y="308" font-family="Liberation Sans" font-size="12.5" fill="#6a92d8" textLength="50" lengthAdjust="spacingAndGlyphs">TODAY()</text>
<line x1="369.50" y1="311.30" x2="1121.00" y2="311.30" stroke="#3d6fc8" stroke-width="1"/>
<text x="372.00" y="367.90" font-family="Liberation Sans" font-size="23.90" font-weight="400" font-style="normal" fill="#f0911c" textLength="93.50" lengthAdjust="spacingAndGlyphs">Company</text>
<rect x="485.50" y="344.20" width="120.30" height="31.30" fill="none" stroke="#217346" stroke-width="2"/>
<rect x="601.60" y="372.40" width="6.20" height="5.80" fill="#217346"/>
<rect x="603.50" y="370.50" width="4.30" height="1.90" fill="#fff"/>
<rect x="371.00" y="394.50" width="116.00" height="173.80" fill="#5283d6"/>
<line x1="371.00" y1="423.50" x2="487.00" y2="423.50" stroke="#e8eef9" stroke-width="1.3"/>
<line x1="371.00" y1="452.50" x2="487.00" y2="452.50" stroke="#e8eef9" stroke-width="1.3"/>
<line x1="371.00" y1="480.50" x2="487.00" y2="480.50" stroke="#e8eef9" stroke-width="1.3"/>
<line x1="371.00" y1="509.50" x2="487.00" y2="509.50" stroke="#e8eef9" stroke-width="1.3"/>
<line x1="371.00" y1="538.50" x2="487.00" y2="538.50" stroke="#e8eef9" stroke-width="1.3"/>
<text x="371.70" y="415.00" font-family="Liberation Sans" font-size="13.00" font-weight="700" font-style="normal" fill="#ffffff" textLength="98.53" lengthAdjust="spacingAndGlyphs">Contact Name:</text>
<text x="371.70" y="443.60" font-family="Liberation Sans" font-size="13.00" font-weight="700" font-style="normal" fill="#ffffff" textLength="89.61" lengthAdjust="spacingAndGlyphs">Contact Title:</text>
<text x="371.70" y="472.20" font-family="Liberation Sans" font-size="13.00" font-weight="700" font-style="normal" fill="#ffffff" textLength="45.88" lengthAdjust="spacingAndGlyphs">Phone:</text>
<text x="371.70" y="501.20" font-family="Liberation Sans" font-size="13.00" font-weight="700" font-style="normal" fill="#ffffff" textLength="28.12" lengthAdjust="spacingAndGlyphs">Fax:</text>
<text x="371.70" y="530.00" font-family="Liberation Sans" font-size="13.00" font-weight="700" font-style="normal" fill="#ffffff" textLength="79.79" lengthAdjust="spacingAndGlyphs">Home Page:</text>
<text x="371.70" y="560.10" font-family="Liberation Sans" font-size="13.00" font-weight="700" font-style="normal" fill="#ffffff" textLength="57.59" lengthAdjust="spacingAndGlyphs">Address:</text>
<rect x="734.30" y="394.70" width="198.90" height="114.00" fill="#5283d6"/>
<line x1="734.30" y1="423.50" x2="933.20" y2="423.50" stroke="#e8eef9" stroke-width="1.3"/>
<line x1="734.30" y1="452.50" x2="933.20" y2="452.50" stroke="#e8eef9" stroke-width="1.3"/>
<line x1="734.30" y1="480.50" x2="933.20" y2="480.50" stroke="#e8eef9" stroke-width="1.3"/>
<text x="736.70" y="415.00" font-family="Liberation Sans" font-size="13.00" font-weight="700" font-style="normal" fill="#ffffff" textLength="57.32" lengthAdjust="spacingAndGlyphs">Country:</text>
<text x="736.70" y="443.70" font-family="Liberation Sans" font-size="13.00" font-weight="700" font-style="normal" fill="#ffffff" textLength="51.02" lengthAdjust="spacingAndGlyphs">Region:</text>
<text x="736.70" y="471.60" font-family="Liberation Sans" font-size="13.00" font-weight="700" font-style="normal" fill="#ffffff" textLength="30.13" lengthAdjust="spacingAndGlyphs">City:</text>
<text x="736.70" y="500.60" font-family="Liberation Sans" font-size="13.00" font-weight="700" font-style="normal" fill="#ffffff" textLength="82.73" lengthAdjust="spacingAndGlyphs">Postal Code:</text>
<rect x="371.00" y="599.40" width="749.00" height="25.90" fill="#5283d6"/>
<line x1="486.30" y1="599.40" x2="486.30" y2="625.30" stroke="#c9d8f2" stroke-width="1.2"/>
<line x1="604.80" y1="599.40" x2="604.80" y2="625.30" stroke="#c9d8f2" stroke-width="1.2"/>
<line x1="734.70" y1="599.40" x2="734.70" y2="625.30" stroke="#c9d8f2" stroke-width="1.2"/>
<line x1="862.00" y1="599.40" x2="862.00" y2="625.30" stroke="#c9d8f2" stroke-width="1.2"/>
<line x1="1014.00" y1="599.40" x2="1014.00" y2="625.30" stroke="#c9d8f2" stroke-width="1.2"/>
<text x="380.60" y="617.50" font-family="Liberation Sans" font-size="13.50" font-weight="700" font-style="normal" fill="#ffffff" textLength="94.79" lengthAdjust="spacingAndGlyphs">Product Name</text>
<text x="509.50" y="617.50" font-family="Liberation Sans" font-size="13.50" font-weight="700" font-style="normal" fill="#ffffff" textLength="72.01" lengthAdjust="spacingAndGlyphs">Product ID</text>
<text x="639.60" y="617.50" font-family="Liberation Sans" font-size="13.50" font-weight="700" font-style="normal" fill="#ffffff" textLength="59.79" lengthAdjust="spacingAndGlyphs">Category</text>
<text x="740.50" y="617.50" font-family="Liberation Sans" font-size="13.50" font-weight="700" font-style="normal" fill="#ffffff" textLength="115.52" lengthAdjust="spacingAndGlyphs">Quantity per Unit</text>
<text x="905.30" y="617.50" font-family="Liberation Sans" font-size="13.50" font-weight="700" font-style="normal" fill="#ffffff" textLength="65.57" lengthAdjust="spacingAndGlyphs">Unit Price</text>
<text x="1023.40" y="617.50" font-family="Liberation Sans" font-size="13.50" font-weight="700" font-style="normal" fill="#ffffff" textLength="12.60" lengthAdjust="spacingAndGlyphs">Di</text>
<rect x="486.00" y="650.50" width="634.00" height="25.30" fill="#f29a1a"/>
<line x1="604.80" y1="650.50" x2="604.80" y2="675.80" stroke="#f8d39a" stroke-width="1.2"/>
<line x1="763.20" y1="650.50" x2="763.20" y2="675.80" stroke="#f8d39a" stroke-width="1.2"/>
<line x1="932.70" y1="650.50" x2="932.70" y2="675.80" stroke="#f8d39a" stroke-width="1.2"/>
<text x="518.30" y="668.80" font-family="Liberation Sans" font-size="13.00" font-weight="700" font-style="normal" fill="#ffffff" textLength="54.27" lengthAdjust="spacingAndGlyphs">OrderID</text>
<text x="654.70" y="668.80" font-family="Liberation Sans" font-size="13.00" font-weight="700" font-style="normal" fill="#ffffff" textLength="57.91" lengthAdjust="spacingAndGlyphs">Quantity</text>
<text x="818.90" y="668.80" font-family="Liberation Sans" font-size="13.00" font-weight="700" font-style="normal" fill="#ffffff" textLength="58.27" lengthAdjust="spacingAndGlyphs">Discount</text>
<text x="995.40" y="668.80" font-family="Liberation Sans" font-size="13.00" font-weight="700" font-style="normal" fill="#ffffff" textLength="62.62" lengthAdjust="spacingAndGlyphs">Sub Total</text>
<line x1="763.20" y1="678.00" x2="763.20" y2="699.00" stroke="#f6e2bf" stroke-width="1"/>
<line x1="932.70" y1="701.00" x2="932.70" y2="722.00" stroke="#f6e2bf" stroke-width="1"/>
<line x1="487.00" y1="701.00" x2="487.00" y2="722.00" stroke="#f6e2bf" stroke-width="1"/>
<text x="488.40" y="716.80" font-family="Liberation Sans" font-size="13.50" font-weight="700" font-style="normal" fill="#1a1a1a" textLength="124.21" lengthAdjust="spacingAndGlyphs">Total by unit price:</text>
<rect x="371.00" y="724.80" width="749.00" height="23.60" fill="#c5dcf8"/>
<line x1="932.70" y1="724.80" x2="932.70" y2="748.40" stroke="#eef4fd" stroke-width="1.5"/>
<text x="371.60" y="741.00" font-family="Liberation Sans" font-size="16.00" font-weight="700" font-style="normal" fill="#1a1a1a" textLength="86.93" lengthAdjust="spacingAndGlyphs">Grand total:</text>
<rect x="370.30" y="225.30" width="750.90" height="524.20" fill="none" stroke="#4ac8f8" stroke-width="2"/>
<line x1="369.50" y1="313.20" x2="1121.00" y2="313.20" stroke="#4ac8f8" stroke-width="2"/>
<line x1="369.50" y1="598.30" x2="1121.00" y2="598.30" stroke="#4ac8f8" stroke-width="2"/>
<rect x="487.00" y="677.40" width="634.00" height="22.60" fill="none" stroke="#4ac8f8" stroke-width="2"/>
<line x1="369.50" y1="723.50" x2="1121.00" y2="723.50" stroke="#4ac8f8" stroke-width="2"/>
<rect x="1068.00" y="225.00" width="53.50" height="19.40" fill="#4ac8f8"/>
<text x="1070.80" y="239.70" font-family="Liberation Sans" font-size="14.00" font-weight="400" font-style="normal" fill="#ffffff" textLength="47.20" lengthAdjust="spacingAndGlyphs">Header</text>
<rect x="1078.50" y="314.00" width="43.00" height="18.60" fill="#4ac8f8"/>
<text x="1081.40" y="327.80" font-family="Liberation Sans" font-size="14.00" font-weight="400" font-style="normal" fill="#ffffff" textLength="36.22" lengthAdjust="spacingAndGlyphs">Detail</text>
<rect x="1035.70" y="599.00" width="85.80" height="17.70" fill="#4ac8f8"/>
<text x="1038.50" y="612.40" font-family="Liberation Sans" font-size="14.00" font-weight="400" font-style="normal" fill="#ffffff" textLength="79.18" lengthAdjust="spacingAndGlyphs">DetailLevel0</text>
<rect x="1035.70" y="678.30" width="85.80" height="18.30" fill="#4ac8f8"/>
<text x="1038.50" y="691.90" font-family="Liberation Sans" font-size="14.00" font-weight="400" font-style="normal" fill="#ffffff" textLength="78.88" lengthAdjust="spacingAndGlyphs">DetailLevel1</text>
<rect x="1074.20" y="725.10" width="47.30" height="17.30" fill="#4ac8f8"/>
<text x="1076.40" y="738.10" font-family="Liberation Sans" font-size="14.00" font-weight="400" font-style="normal" fill="#ffffff" textLength="41.40" lengthAdjust="spacingAndGlyphs">Footer</text>
<text x="1146.70" y="807.30" font-family="Liberation Sans" font-size="14.50" font-weight="400" font-style="normal" fill="#8a8a8a" textLength="324.91" lengthAdjust="spacingAndGlyphs">Powered by MESCIUS SpreadJS Evaluation Version</text>
<text x="1284.40" y="829.10" font-family="Liberation Sans" font-size="14.50" font-weight="400" font-style="normal" fill="#8a8a8a" textLength="187.23" lengthAdjust="spacingAndGlyphs">Not Licensed for Distribution</text>
<text x="1115.20" y="873.10" font-family="Liberation Sans" font-size="14.50" font-weight="400" font-style="normal" fill="#8a8a8a" textLength="356.36" lengthAdjust="spacingAndGlyphs">Add-ons Enabled: ReportSheet, PivotTable, GanttSheet</text>
<rect x="1485.00" y="201.00" width="20.50" height="684.50" fill="#f6f7f9"/>
<rect x="1489.50" y="217.40" width="15.00" height="651.60" fill="#e8e8e8"/>
<rect x="1489.50" y="201.50" width="15.00" height="16.00" fill="#fff" stroke="#a8a8a8" stroke-width="1" rx="2"/>
<path d="M1493.5,211 L1497,206.5 L1500.5,211 Z" fill="#777"/>
<rect x="1489.50" y="217.50" width="15.00" height="364.00" fill="#fff" stroke="#a8a8a8" stroke-width="1"/>
<rect x="1489.50" y="869.00" width="15.00" height="16.00" fill="#fff" stroke="#a8a8a8" stroke-width="1" rx="2"/>
<path d="M1493.5,875 L1497,879.5 L1500.5,875 Z" fill="#777"/>
<rect x="1513" y="546" width="1" height="1" fill="#222"/>
<rect x="1515" y="546" width="1" height="1" fill="#222"/>
<rect x="1513" y="548" width="1" height="1" fill="#222"/>
<rect x="1515" y="548" width="1" height="1" fill="#222"/>
<rect x="1513" y="550" width="1" height="1" fill="#222"/>
<rect x="1515" y="550" width="1" height="1" fill="#222"/>
<rect x="1513" y="552" width="1" height="1" fill="#222"/>
<rect x="1515" y="552" width="1" height="1" fill="#222"/>
<rect x="1513" y="554" width="1" height="1" fill="#222"/>
<rect x="1515" y="554" width="1" height="1" fill="#222"/>
<rect x="1513" y="556" width="1" height="1" fill="#222"/>
<rect x="1515" y="556" width="1" height="1" fill="#222"/>
<rect x="1513" y="558" width="1" height="1" fill="#222"/>
<rect x="1515" y="558" width="1" height="1" fill="#222"/>
<rect x="1513" y="560" width="1" height="1" fill="#222"/>
<rect x="1515" y="560" width="1" height="1" fill="#222"/>
<rect x="1513" y="562" width="1" height="1" fill="#222"/>
<rect x="1515" y="562" width="1" height="1" fill="#222"/>
<rect x="1513" y="564" width="1" height="1" fill="#222"/>
<rect x="1515" y="564" width="1" height="1" fill="#222"/>
<rect x="1513" y="566" width="1" height="1" fill="#222"/>
<rect x="1515" y="566" width="1" height="1" fill="#222"/>
<rect x="1513" y="568" width="1" height="1" fill="#222"/>
<rect x="1515" y="568" width="1" height="1" fill="#222"/>
<rect x="1513" y="570" width="1" height="1" fill="#222"/>
<rect x="1515" y="570" width="1" height="1" fill="#222"/>
<rect x="279.00" y="885.50" width="1226.50" height="30.30" fill="#f6f7f9"/>
<line x1="279.00" y1="885.50" x2="405.00" y2="885.50" stroke="#c4c4c4" stroke-width="1"/>
<line x1="525.00" y1="885.50" x2="1484.50" y2="885.50" stroke="#c4c4c4" stroke-width="1"/>
<path d="M311.9,897 L307,901 L311.9,905 Z" fill="#c0c0c0"/>
<path d="M339,897 L344,901 L339,905 Z" fill="#333"/>
<rect x="357.00" y="896.00" width="16.60" height="2.00" fill="#1e3d2b"/>
<rect x="357.00" y="901.40" width="16.60" height="2.00" fill="#1e3d2b"/>
<rect x="357.00" y="907.00" width="16.60" height="2.00" fill="#1e3d2b"/>
<rect x="405.50" y="885.50" width="119.00" height="25.50" fill="url(#tabg)"/>
<line x1="405.50" y1="885.50" x2="405.50" y2="911.00" stroke="#c4c4c4" stroke-width="1"/>
<line x1="524.50" y1="885.50" x2="524.50" y2="911.00" stroke="#c4c4c4" stroke-width="1"/>
<rect x="404.70" y="910.40" width="120.80" height="2.30" fill="#217346"/>
<text x="419.60" y="902.60" font-family="Liberation Sans" font-size="14.50" font-weight="700" font-style="normal" fill="#217346" textLength="91.00" lengthAdjust="spacingAndGlyphs">Master Detail</text>
<text x="539.00" y="903.00" font-family="Liberation Sans" font-size="15.00" font-weight="400" font-style="normal" fill="#333" textLength="42.99" lengthAdjust="spacingAndGlyphs">Sheet1</text>
<line x1="599.60" y1="889.00" x2="599.60" y2="911.70" stroke="#bdbdbd" stroke-width="1.3"/>
<circle cx="624.5" cy="901.5" r="1.3" fill="#444"/>
<circle cx="629" cy="901.5" r="1.3" fill="#444"/>
<circle cx="633.3" cy="901.5" r="1.3" fill="#444"/>
<circle cx="658.5" cy="900.5" r="7.7" fill="none" stroke="#555" stroke-width="1.4"/>
<line x1="654.00" y1="900.50" x2="663.00" y2="900.50" stroke="#555" stroke-width="1.6"/>
<line x1="658.50" y1="896.00" x2="658.50" y2="905.00" stroke="#555" stroke-width="1.6"/>
<rect x="690.50" y="896.20" width="1.70" height="1.60" fill="#bbb"/>
<rect x="690.50" y="900.70" width="1.70" height="1.60" fill="#bbb"/>
<rect x="690.50" y="905.20" width="1.70" height="1.60" fill="#bbb"/>
<rect x="707.00" y="892.80" width="777.00" height="15.80" fill="#e8e8e8"/>
<rect x="707.50" y="893.00" width="16.00" height="15.50" fill="#fff" stroke="#a8a8a8" stroke-width="1" rx="2"/>
<path d="M718,897 L713.5,900.7 L718,904.4 Z" fill="#666"/>
<rect x="723.50" y="893.00" width="420.50" height="15.50" fill="#fff" stroke="#a8a8a8" stroke-width="1"/>
<rect x="1468.50" y="893.00" width="15.00" height="15.50" fill="#fff" stroke="#a8a8a8" stroke-width="1" rx="2"/>
<path d="M1473.5,897 L1478,900.7 L1473.5,904.4 Z" fill="#666"/>
<line x1="1854.50" y1="201.00" x2="1854.50" y2="916.00" stroke="#d6d6d6" stroke-width="1"/>
<rect x="1855.00" y="201.00" width="43.00" height="715.00" fill="#ffffff"/>
<text x="1526.00" y="230.80" font-family="Liberation Sans" font-size="16.80" font-weight="400" font-style="normal" fill="#1f1f1f" textLength="127.34" lengthAdjust="spacingAndGlyphs" stroke="#1f1f1f" stroke-width="0.6">Template Range</text>
<path d="M1531,259 L1535.5,263.5 L1540,259" fill="none" stroke="#4a4a4a" stroke-width="1.5"/>
<rect x="1555.00" y="253.00" width="18.00" height="4.00" fill="#4fc8f8" rx="1"/>
<rect x="1555.00" y="259.60" width="7.70" height="4.10" fill="#4fc8f8" rx="1"/>
<rect x="1555.00" y="266.50" width="7.70" height="4.20" fill="#4fc8f8" rx="1"/>
<rect x="1565.00" y="259.60" width="8.00" height="11.10" fill="#4fc8f8" rx="1"/>
<text x="1584.10" y="267.20" font-family="Liberation Sans" font-size="14.20" font-weight="400" font-style="normal" fill="#262626" textLength="100.23" lengthAdjust="spacingAndGlyphs">Template Range</text>
<line x1="1556.20" y1="285.60" x2="1556.20" y2="304.80" stroke="#cfcfcf" stroke-width="1" stroke-dasharray="1,2"/>
<line x1="1556.20" y1="295.30" x2="1565.70" y2="295.30" stroke="#cfcfcf" stroke-width="1" stroke-dasharray="1,2"/>
<rect x="1575.00" y="284.10" width="22.20" height="22.00" fill="#d4e9fb"/>
<rect x="1577.30" y="285.30" width="4.70" height="3.40" fill="#f0a048"/>
<rect x="1583.70" y="285.30" width="4.60" height="3.40" fill="#f0a048"/>
<rect x="1590.00" y="285.30" width="4.50" height="3.40" fill="#f0a048"/>
<rect x="1577.30" y="290.30" width="4.70" height="3.10" fill="#a5a5a5"/>
<rect x="1583.70" y="290.30" width="4.60" height="3.10" fill="#a5a5a5"/>
<rect x="1590.00" y="290.30" width="4.50" height="3.10" fill="#a5a5a5"/>
<rect x="1577.30" y="295.30" width="4.70" height="3.20" fill="#a5a5a5"/>
<rect x="1583.70" y="295.30" width="4.60" height="3.20" fill="#a5a5a5"/>
<rect x="1590.00" y="295.30" width="4.50" height="3.20" fill="#a5a5a5"/>
<rect x="1577.30" y="300.00" width="4.70" height="3.20" fill="#a5a5a5"/>
<rect x="1583.70" y="300.00" width="4.60" height="3.20" fill="#a5a5a5"/>
<rect x="1590.00" y="300.00" width="4.50" height="3.20" fill="#a5a5a5"/>
<text x="1606.40" y="300.20" font-family="Liberation Sans" font-size="14.20" font-weight="400" font-style="normal" fill="#262626" textLength="44.60" lengthAdjust="spacingAndGlyphs">Header</text>
<path d="M1553,331 L1557.5,335.5 L1562,331" fill="none" stroke="#4a4a4a" stroke-width="1.5"/>
<rect x="1575.40" y="323.10" width="21.20" height="21.20" fill="#d9d9d9"/>
<rect x="1576.00" y="323.60" width="6.10" height="4.30" fill="#a5a5a5"/>
<rect x="1582.80" y="323.60" width="6.20" height="4.30" fill="#a5a5a5"/>
<rect x="1589.70" y="323.60" width="6.30" height="4.30" fill="#a5a5a5"/>
<rect x="1576.00" y="328.90" width="6.10" height="4.30" fill="#f0a048"/>
<rect x="1582.80" y="328.90" width="6.20" height="4.30" fill="#f0a048"/>
<rect x="1589.70" y="328.90" width="6.30" height="4.30" fill="#f0a048"/>
<rect x="1576.00" y="334.70" width="6.10" height="4.30" fill="#f0a048"/>
<rect x="1582.80" y="334.70" width="6.20" height="4.30" fill="#f0a048"/>
<rect x="1589.70" y="334.70" width="6.30" height="4.30" fill="#f0a048"/>
<rect x="1576.00" y="340.00" width="6.10" height="4.00" fill="#a5a5a5"/>
<rect x="1582.80" y="340.00" width="6.20" height="4.00" fill="#a5a5a5"/>
<rect x="1589.70" y="340.00" width="6.30" height="4.00" fill="#a5a5a5"/>
<text x="1606.40" y="331.00" font-family="Liberation Sans" font-size="14.20" font-weight="400" font-style="normal" fill="#262626" textLength="35.32" lengthAdjust="spacingAndGlyphs">Detail</text>
<text x="1606.40" y="348.20" font-family="Liberation Sans" font-size="11.60" font-weight="400" font-style="normal" fill="#707070" textLength="94.81" lengthAdjust="spacingAndGlyphs">Binding: Suppliers</text>
<path d="M1575,375 L1579.5,379.5 L1584,375" fill="none" stroke="#4a4a4a" stroke-width="1.5"/>
<rect x="1597.60" y="367.20" width="21.00" height="21.40" fill="#dcdcdc"/>
<rect x="1598.40" y="368.70" width="19.40" height="3.50" fill="#4a82d0"/>
<rect x="1604.10" y="374.20" width="13.70" height="3.00" fill="#a8a8a8"/>
<rect x="1604.10" y="378.70" width="13.70" height="3.00" fill="#a8a8a8"/>
<rect x="1598.40" y="383.70" width="19.40" height="3.50" fill="#4a82d0"/>
<text x="1628.10" y="375.00" font-family="Liberation Sans" font-size="14.20" font-weight="400" font-style="normal" fill="#262626" textLength="83.39" lengthAdjust="spacingAndGlyphs">Detail Level 0</text>
<text x="1628.10" y="392.70" font-family="Liberation Sans" font-size="11.60" font-weight="400" font-style="normal" fill="#707070" textLength="92.58" lengthAdjust="spacingAndGlyphs">Binding: Products</text>
<line x1="1600.30" y1="413.40" x2="1600.30" y2="422.30" stroke="#cfcfcf" stroke-width="1" stroke-dasharray="1,2"/>
<line x1="1600.30" y1="422.00" x2="1610.00" y2="422.00" stroke="#cfcfcf" stroke-width="1" stroke-dasharray="1,2"/>
<rect x="1619.60" y="411.30" width="21.00" height="21.40" fill="#dcdcdc"/>
<rect x="1620.40" y="412.80" width="19.40" height="3.50" fill="#4a82d0"/>
<rect x="1626.10" y="418.30" width="13.70" height="3.00" fill="#a8a8a8"/>
<rect x="1626.10" y="422.80" width="13.70" height="3.00" fill="#a8a8a8"/>
<rect x="1620.40" y="427.80" width="19.40" height="3.50" fill="#4a82d0"/>
<text x="1650.20" y="418.60" font-family="Liberation Sans" font-size="14.20" font-weight="400" font-style="normal" fill="#262626" textLength="82.59" lengthAdjust="spacingAndGlyphs">Detail Level 1</text>
<text x="1650.20" y="436.50" font-family="Liberation Sans" font-size="11.60" font-weight="400" font-style="normal" fill="#707070" textLength="81.88" lengthAdjust="spacingAndGlyphs">Binding: Orders</text>
<line x1="1556.20" y1="451.20" x2="1556.20" y2="460.20" stroke="#cfcfcf" stroke-width="1" stroke-dasharray="1,2"/>
<line x1="1556.20" y1="460.00" x2="1565.90" y2="460.00" stroke="#cfcfcf" stroke-width="1" stroke-dasharray="1,2"/>
<rect x="1575.10" y="448.90" width="21.20" height="21.20" fill="#d9d9d9"/>
<rect x="1575.70" y="449.40" width="6.10" height="4.30" fill="#a5a5a5"/>
<rect x="1582.50" y="449.40" width="6.20" height="4.30" fill="#a5a5a5"/>
<rect x="1589.40" y="449.40" width="6.30" height="4.30" fill="#a5a5a5"/>
<rect x="1575.70" y="454.70" width="6.10" height="4.30" fill="#a5a5a5"/>
<rect x="1582.50" y="454.70" width="6.20" height="4.30" fill="#a5a5a5"/>
<rect x="1589.40" y="454.70" width="6.30" height="4.30" fill="#a5a5a5"/>
<rect x="1575.70" y="460.50" width="6.10" height="4.30" fill="#a5a5a5"/>
<rect x="1582.50" y="460.50" width="6.20" height="4.30" fill="#a5a5a5"/>
<rect x="1589.40" y="460.50" width="6.30" height="4.30" fill="#a5a5a5"/>
<rect x="1575.70" y="465.80" width="6.10" height="4.00" fill="#f0a048"/>
<rect x="1582.50" y="465.80" width="6.20" height="4.00" fill="#f0a048"/>
<rect x="1589.40" y="465.80" width="6.30" height="4.00" fill="#f0a048"/>
<text x="1606.10" y="464.60" font-family="Liberation Sans" font-size="14.20" font-weight="400" font-style="normal" fill="#262626" textLength="40.60" lengthAdjust="spacingAndGlyphs">Footer</text>
<rect x="1865.50" y="213.50" width="20.00" height="17.00" fill="#fff" stroke="#777" stroke-width="1"/>
<line x1="1871.50" y1="213.50" x2="1871.50" y2="230.50" stroke="#777" stroke-width="1"/>
<circle cx="1882" cy="228.5" r="4.6" fill="#fff"/>
<path d="M1878.3,226.6 A4,4 0 0 1 1885.5,226.4 M1885.7,230.4 A4,4 0 0 1 1878.5,230.6" fill="none" stroke="#f0a048" stroke-width="1.2"/>
<path d="M1884.2,224.8 L1886,226.8 L1883.4,227.4 Z M1879.8,232.2 L1878,230.2 L1880.6,229.6 Z" fill="#f0a048" stroke="#f0a048" stroke-width="0.6"/>
<rect x="1855.00" y="247.00" width="3.00" height="37.60" fill="#217346"/>
<rect x="1869.00" y="260.00" width="14.50" height="14.50" fill="#fff" stroke="#111" stroke-width="1.8"/>
<line x1="1869.00" y1="267.00" x2="1883.50" y2="267.00" stroke="#111" stroke-width="1.5"/>
<path d="M1876,260 L1878,262.5 H1883.5 V260 Z" fill="#111"/>
<path d="M1876,267 L1878,269.5 H1883.5 V267 Z" fill="#111"/>
<rect x="4.00" y="916.00" width="1894.00" height="24.00" fill="#217346"/>
<text x="15.30" y="932.60" font-family="Liberation Sans" font-size="12.20" font-weight="400" font-style="normal" fill="#ffffff" textLength="31.01" lengthAdjust="spacingAndGlyphs">Ready</text>
<rect x="1669.30" y="928.80" width="13.30" height="2.00" fill="#a9b9ae"/>
<line x1="1689.10" y1="929.60" x2="1820.80" y2="929.60" stroke="#ffffff" stroke-width="1"/>
<rect x="1755.00" y="924.10" width="5.00" height="10.70" fill="#eeeeee"/>
<rect x="1828.30" y="927.50" width="12.50" height="2.00" fill="#a9b9ae"/>
<line x1="1834.50" y1="921.40" x2="1834.50" y2="935.00" stroke="#ffffff" stroke-width="1"/>
<text x="1854.90" y="933.00" font-family="Liberation Sans" font-size="12.90" font-weight="400" font-style="normal" fill="#ffffff" textLength="27.88" lengthAdjust="spacingAndGlyphs">110%</text>
</svg>
</body></html>
